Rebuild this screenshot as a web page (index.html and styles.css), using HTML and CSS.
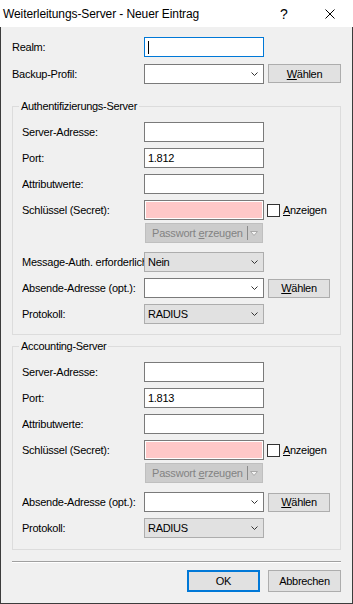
FILE: index.html
```html
<!DOCTYPE html>
<html lang="de">
<head>
    <meta charset="UTF-8">
    <title>Weiterleitungs-Server - Neuer Eintrag</title>
    <link rel="stylesheet" href="styles.css">
</head>
<body>
    <div class="window">
        <div class="titlebar">
            <span class="title">Weiterleitungs-Server - Neuer Eintrag</span>
            <span class="caption-btn">?</span>
            <span class="caption-btn">
                <svg width="10" height="10" viewBox="0 0 10 10"><path d="M0.5 0.5 L9.5 9.5 M9.5 0.5 L0.5 9.5" stroke="#000" stroke-width="1" fill="none"/></svg>
            </span>
        </div>

        <div class="dialog">
            <div class="row">
                <span class="label">Realm:</span>
                <div class="field focused"><span class="caret"></span></div>
            </div>
            <div class="row gap7">
                <span class="label">Backup-Profil:</span>
                <div class="combo">
                    <span class="value"></span>
                    <svg class="chevron" width="7" height="4" viewBox="0 0 7 4"><polyline points="0.5,0.5 3.5,3.5 6.5,0.5" stroke="#333" fill="none"/></svg>
                </div>
                <button class="btn choose"><u>W</u>ählen</button>
            </div>

            <fieldset class="group first">
                <legend>Authentifizierungs-Server</legend>
                <div class="row">
                    <span class="label">Server-Adresse:</span>
                    <div class="field"></div>
                </div>
                <div class="row gap6">
                    <span class="label">Port:</span>
                    <div class="field">1.812</div>
                </div>
                <div class="row gap6">
                    <span class="label">Attributwerte:</span>
                    <div class="field"></div>
                </div>
                <div class="row gap6">
                    <span class="label">Schlüssel (Secret):</span>
                    <div class="field secret"></div>
                    <span class="check"></span>
                    <span class="check-label"><u>A</u>nzeigen</span>
                </div>
                <div class="row gap3 indent">
                    <div class="split">
                        <span class="split-text">Passwort <u>e</u>rzeugen</span>
                        <span class="split-sep"></span>
                        <svg width="8" height="5" viewBox="0 0 8 5"><polygon points="0.5,0.5 7.5,0.5 4,4.5" fill="#f4f4f4" stroke="#a8a8a8"/></svg>
                    </div>
                </div>
                <div class="row gap9">
                    <span class="label">Message-Auth. erforderlich</span>
                    <div class="combo list">
                        <span class="value">Nein</span>
                        <svg class="chevron" width="7" height="4" viewBox="0 0 7 4"><polyline points="0.5,0.5 3.5,3.5 6.5,0.5" stroke="#333" fill="none"/></svg>
                    </div>
                </div>
                <div class="row gap6">
                    <span class="label">Absende-Adresse (opt.):</span>
                    <div class="combo">
                        <span class="value"></span>
                        <svg class="chevron" width="7" height="4" viewBox="0 0 7 4"><polyline points="0.5,0.5 3.5,3.5 6.5,0.5" stroke="#333" fill="none"/></svg>
                    </div>
                    <button class="btn choose small"><u>W</u>ählen</button>
                </div>
                <div class="row gap6">
                    <span class="label">Protokoll:</span>
                    <div class="combo list">
                        <span class="value">RADIUS</span>
                        <svg class="chevron" width="7" height="4" viewBox="0 0 7 4"><polyline points="0.5,0.5 3.5,3.5 6.5,0.5" stroke="#333" fill="none"/></svg>
                    </div>
                </div>
            </fieldset>

            <fieldset class="group second">
                <legend>Accounting-Server</legend>
                <div class="row">
                    <span class="label">Server-Adresse:</span>
                    <div class="field"></div>
                </div>
                <div class="row gap6">
                    <span class="label">Port:</span>
                    <div class="field">1.813</div>
                </div>
                <div class="row gap6">
                    <span class="label">Attributwerte:</span>
                    <div class="field"></div>
                </div>
                <div class="row gap6">
                    <span class="label">Schlüssel (Secret):</span>
                    <div class="field secret"></div>
                    <span class="check"></span>
                    <span class="check-label"><u>A</u>nzeigen</span>
                </div>
                <div class="row gap3 indent">
                    <div class="split">
                        <span class="split-text">Passwort <u>e</u>rzeugen</span>
                        <span class="split-sep"></span>
                        <svg width="8" height="5" viewBox="0 0 8 5"><polygon points="0.5,0.5 7.5,0.5 4,4.5" fill="#f4f4f4" stroke="#a8a8a8"/></svg>
                    </div>
                </div>
                <div class="row gap9">
                    <span class="label">Absende-Adresse (opt.):</span>
                    <div class="combo">
                        <span class="value"></span>
                        <svg class="chevron" width="7" height="4" viewBox="0 0 7 4"><polyline points="0.5,0.5 3.5,3.5 6.5,0.5" stroke="#333" fill="none"/></svg>
                    </div>
                    <button class="btn choose small"><u>W</u>ählen</button>
                </div>
                <div class="row gap6">
                    <span class="label">Protokoll:</span>
                    <div class="combo list">
                        <span class="value">RADIUS</span>
                        <svg class="chevron" width="7" height="4" viewBox="0 0 7 4"><polyline points="0.5,0.5 3.5,3.5 6.5,0.5" stroke="#333" fill="none"/></svg>
                    </div>
                </div>
            </fieldset>

            <div class="separator"></div>

            <div class="footer">
                <button class="btn default">OK</button>
                <button class="btn">Abbrechen</button>
            </div>
        </div>
    </div>
</body>
</html>
```

FILE: styles.css
```css
body {
    margin: 0;
    font-family: "Liberation Sans", Arial, sans-serif;
    font-size: 11px;
    color: #000;
    background-color: #f0f0f0;
}
.window {
    width: 353px;
    height: 604px;
    display: flex;
    flex-direction: column;
    background-color: #f0f0f0;
}
.titlebar {
    height: 27px;
    flex: none;
    display: flex;
    align-items: center;
    background-color: white;
    font-size: 12px;
    padding-left: 3px;
}
.title {
    flex: 1;
    letter-spacing: -0.1px;
}
.caption-btn {
    width: 46px;
    height: 27px;
    display: flex;
    align-items: center;
    justify-content: center;
    font-size: 14px;
}
.dialog {
    flex: 1;
    border: 1px solid #3c3c3c;
    border-top: none;
    padding: 10px 11px 0;
}
.row {
    display: flex;
    align-items: center;
    height: 20px;
}
.gap3 { margin-top: 3px; }
.gap6 { margin-top: 6px; }
.gap7 { margin-top: 7px; }
.gap9 { margin-top: 9px; }
.label {
    width: 132px;
    flex: none;
    white-space: nowrap;
    overflow: hidden;
    letter-spacing: -0.25px;
}
.group .label {
    width: 122px;
}
.indent {
    padding-left: 123px;
}
.field, .combo {
    width: 120px;
    height: 20px;
    box-sizing: border-box;
    flex: none;
    border: 1px solid #7a7a7a;
    background-color: white;
    padding-left: 3px;
    display: flex;
    align-items: center;
    letter-spacing: -0.3px;
}
.field.focused {
    border-color: #0078d7;
}
.caret {
    width: 1px;
    height: 13px;
    background-color: #000;
}
.field.secret {
    background-color: #ffc8c8;
    box-shadow: inset 0 0 0 1px white;
}
.combo .value {
    flex: 1;
}
.combo .chevron {
    margin-right: 5px;
}
.combo.list {
    background-color: #e1e1e1;
    border-color: #adadad;
}
.btn {
    font-family: inherit;
    font-size: 11px;
    color: #000;
    background-color: #e1e1e1;
    border: 1px solid #adadad;
    padding: 0;
    letter-spacing: -0.3px;
}
.btn.choose {
    width: 73px;
    height: 19px;
    margin-left: 4px;
    align-self: flex-start;
}
.btn.choose.small {
    width: 62px;
    align-self: center;
}
.check {
    width: 13px;
    height: 13px;
    box-sizing: border-box;
    border: 1px solid #333;
    background-color: white;
    margin-left: 3px;
}
.check-label {
    margin-left: 3px;
    letter-spacing: -0.3px;
}
.split {
    width: 118px;
    height: 20px;
    box-sizing: border-box;
    border: 1px solid #bfbfbf;
    background-color: #cccccc;
    color: #838383;
    display: flex;
    align-items: center;
    padding-left: 6px;
    letter-spacing: -0.2px;
}
.split-text {
    flex: 1;
}
.split-sep {
    width: 1px;
    height: 14px;
    background-color: #8a8a8a;
    margin-right: 2px;
}
.split svg {
    margin-right: 4px;
}
.group {
    margin: 0;
    border: 1px solid #dcdcdc;
    padding: 9px 9px 10px;
}
.group legend {
    padding: 0 2px;
    margin-left: -3px;
    line-height: 14px;
    letter-spacing: -0.3px;
}
.group.first {
    margin-top: 15px;
}
.group.second {
    margin-top: 4px;
    padding-bottom: 11px;
}
.separator {
    margin-top: 11px;
    border-top: 1px solid #a0a0a0;
    border-bottom: 1px solid white;
}
.footer {
    display: flex;
    justify-content: flex-end;
    gap: 8px;
    margin-top: 7px;
}
.footer .btn {
    width: 73px;
    height: 22px;
}
.btn.default {
    border: 2px solid #0078d7;
}
```
